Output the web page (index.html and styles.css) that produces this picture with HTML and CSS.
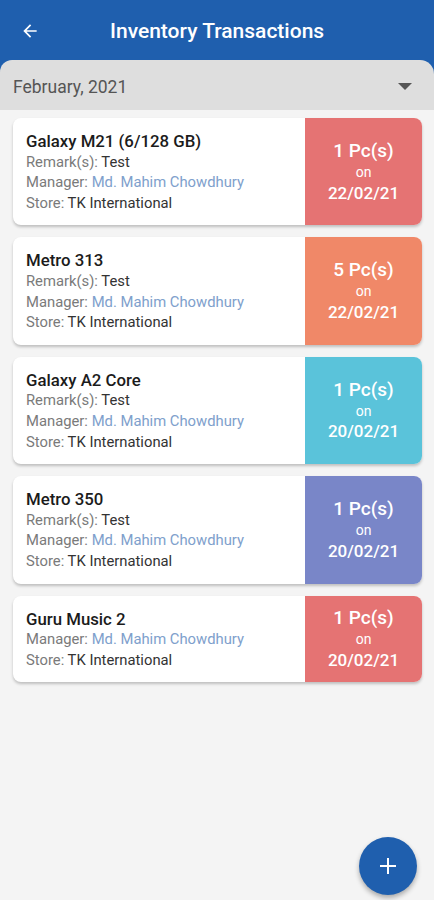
FILE: index.html
```html
<!doctype html>
<html lang="en">
<head>
    <meta charset="UTF-8">
    <meta name="viewport" content="width=device-width, initial-scale=1.0">
    <title>Inventory Transactions</title>
    <link rel="stylesheet" href="styles.css">
</head>
<body>
<div class="top">
    <div class="appbar">
        <svg class="back" width="20" height="20" viewBox="0 0 24 24">
            <path d="M20 11H7.83l5.59-5.59L12 4l-8 8 8 8 1.41-1.41L7.83 13H20v-2z" fill="#fff"/>
        </svg>
        <h1>Inventory Transactions</h1>
    </div>
    <div class="month">
        <span>February, 2021</span>
        <svg width="14" height="8" viewBox="0 0 14 8"><path d="M0 0h14L7 7z" fill="#555"/></svg>
    </div>
</div>

<div class="list">
    <div class="card">
        <div class="info">
            <div class="name">Galaxy M21 (6/128 GB)</div>
            <div class="line"><span class="label">Remark(s):</span> Test</div>
            <div class="line"><span class="label">Manager:</span> <span class="manager">Md. Mahim Chowdhury</span></div>
            <div class="line"><span class="label">Store:</span> TK International</div>
        </div>
        <div class="qty red">
            <div class="pcs">1 Pc(s)</div>
            <div class="on">on</div>
            <div class="date">22/02/21</div>
        </div>
    </div>
    <div class="card">
        <div class="info">
            <div class="name">Metro 313</div>
            <div class="line"><span class="label">Remark(s):</span> Test</div>
            <div class="line"><span class="label">Manager:</span> <span class="manager">Md. Mahim Chowdhury</span></div>
            <div class="line"><span class="label">Store:</span> TK International</div>
        </div>
        <div class="qty orange">
            <div class="pcs">5 Pc(s)</div>
            <div class="on">on</div>
            <div class="date">22/02/21</div>
        </div>
    </div>
    <div class="card">
        <div class="info">
            <div class="name">Galaxy A2 Core</div>
            <div class="line"><span class="label">Remark(s):</span> Test</div>
            <div class="line"><span class="label">Manager:</span> <span class="manager">Md. Mahim Chowdhury</span></div>
            <div class="line"><span class="label">Store:</span> TK International</div>
        </div>
        <div class="qty cyan">
            <div class="pcs">1 Pc(s)</div>
            <div class="on">on</div>
            <div class="date">20/02/21</div>
        </div>
    </div>
    <div class="card">
        <div class="info">
            <div class="name">Metro 350</div>
            <div class="line"><span class="label">Remark(s):</span> Test</div>
            <div class="line"><span class="label">Manager:</span> <span class="manager">Md. Mahim Chowdhury</span></div>
            <div class="line"><span class="label">Store:</span> TK International</div>
        </div>
        <div class="qty indigo">
            <div class="pcs">1 Pc(s)</div>
            <div class="on">on</div>
            <div class="date">20/02/21</div>
        </div>
    </div>
    <div class="card">
        <div class="info">
            <div class="name">Guru Music 2</div>
            <div class="line"><span class="label">Manager:</span> <span class="manager">Md. Mahim Chowdhury</span></div>
            <div class="line"><span class="label">Store:</span> TK International</div>
        </div>
        <div class="qty red">
            <div class="pcs">1 Pc(s)</div>
            <div class="on">on</div>
            <div class="date">20/02/21</div>
        </div>
    </div>
</div>

<div class="fab">
    <svg width="20" height="20" viewBox="0 0 20 20"><path d="M9 2h2v7h7v2h-7v7H9v-7H2V9h7z" fill="#fff"/></svg>
</div>
</body>
</html>
```

FILE: styles.css
```css
body{
    margin: 0;
    font-family: Roboto, "Liberation Sans", sans-serif;
    background-color: #f4f4f4;
    min-height: 900px;
}
.top{
    background-color: #1f5fae;
}
.appbar{
    height: 60px;
    display: flex;
    align-items: center;
    padding: 2px 0 0 20px;
    box-sizing: border-box;
}
.appbar h1{
    margin: 0 0 0 70px;
    color: #fff;
    font-size: 21px;
    font-weight: 500;
}
.month{
    height: 50px;
    background-color: #dedede;
    border-radius: 12px 14px 0 0;
    display: flex;
    align-items: center;
    justify-content: space-between;
    padding: 4px 22px 0 13px;
    box-sizing: border-box;
    color: #555;
    font-size: 17.5px;
}
.list{
    padding: 8px 12px 0 13px;
    display: flex;
    flex-direction: column;
    gap: 12px;
}
.card{
    display: flex;
    background-color: #fff;
    border-radius: 8px;
    box-shadow: 0 2px 3px rgba(0,0,0,0.22);
    overflow: hidden;
}
.info{
    flex: 1;
    padding: 13px 13px 12px;
    line-height: 20.6px;
}
.name{
    font-size: 16.8px;
    font-weight: 500;
    color: #1b1b1b;
}
.line{
    font-size: 14.8px;
    color: #333;
}
.label{
    color: #7a7a7a;
}
.manager{
    color: #7ea0cc;
}
.qty{
    width: 117px;
    display: flex;
    flex-direction: column;
    justify-content: center;
    align-items: center;
    color: #fff;
    line-height: 20.8px;
    padding-top: 1px;
}
.qty .pcs{
    font-size: 19px;
    font-weight: 500;
}
.qty .on{
    font-size: 14px;
}
.qty .date{
    font-size: 17px;
    font-weight: 500;
}
.red{
    background-color: #e57373;
}
.orange{
    background-color: #f08868;
}
.cyan{
    background-color: #5ac3da;
}
.indigo{
    background-color: #7986c8;
}
.fab{
    position: fixed;
    right: 17px;
    bottom: 5px;
    width: 58px;
    height: 58px;
    border-radius: 50%;
    background-color: #1f5fae;
    box-shadow: 0 3px 5px rgba(0,0,0,0.3);
    display: flex;
    align-items: center;
    justify-content: center;
}
```
